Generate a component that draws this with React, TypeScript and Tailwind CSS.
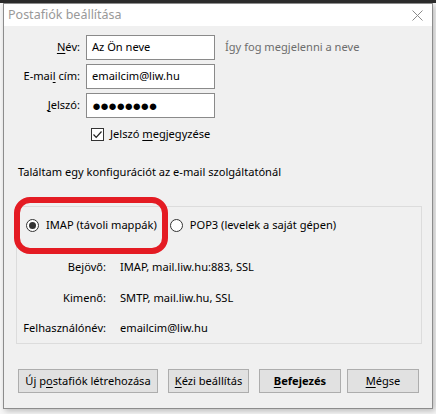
import React from "react";

const font = { fontFamily: '"Noto Sans", "Open Sans", sans-serif' };

const U: React.FC<{ children: React.ReactNode }> = ({ children }) => (
  <span className="underline underline-offset-2">{children}</span>
);

const Field: React.FC<{ label: React.ReactNode; value: string; password?: boolean }> = ({ label, value, password }) => (
  <div className="flex items-center h-[25px]">
    <div className="w-[74px] text-right pr-[6px]">{label}</div>
    <div className="w-[129px] h-[25px] bg-white border border-[#8a8a8a] flex items-center px-[5px]">
      {password ? (
        <span className="text-[15px] leading-none tracking-[-1px] font-bold">●●●●●●●●</span>
      ) : (
        value
      )}
    </div>
  </div>
);

const Radio: React.FC<{ checked?: boolean; label: string }> = ({ checked, label }) => (
  <div className="flex items-center gap-[7px]">
    <div className="w-[13px] h-[13px] rounded-full border border-[#333] bg-white flex items-center justify-center">
      {checked && <div className="w-[7px] h-[7px] rounded-full bg-[#333]" />}
    </div>
    <span>{label}</span>
  </div>
);

const Btn: React.FC<{ w: string; children: React.ReactNode; bold?: boolean }> = ({ w, children, bold }) => (
  <div
    className={`${w} h-[24px] bg-[#e1e1e1] border border-[#adadad] flex items-center justify-center ${bold ? "font-bold" : ""}`}
  >
    {children}
  </div>
);

export default function App() {
  return (
    <div className="w-[436px] h-[414px] bg-[#f7f7f7] border-t-[3px] border-[#2b2b2b] overflow-hidden text-[11.1px] text-black" style={font}>
      <div className="ml-[3px] w-[430px] h-[406px] bg-[#f0f0f0] border border-[#8c8c8c] shadow-[2px_2px_6px_rgba(0,0,0,0.25)] flex flex-col">
        {/* title bar */}
        <div className="h-[22px] bg-white flex items-center justify-between pl-[4px] pr-[9px] text-[#999]">
          <span className="text-[12.5px]">Postafiók beállítása</span>
          <svg width="11" height="11" viewBox="0 0 11 11" className="mt-[1px]">
            <path d="M0.5 0.5 L10.5 10.5 M10.5 0.5 L0.5 10.5" stroke="#8a8a8a" strokeWidth="1" />
          </svg>
        </div>

        <div className="relative flex-1 flex flex-col">
          {/* form */}
          <div className="flex flex-col gap-[4px] mt-[9px] ml-[8px]">
            <div className="flex items-center">
              <Field label={<><U>N</U>év:</>} value="Az Ön neve" />
              <span className="ml-[10px] text-[#6d6d6d]">Így fog megjelenni a neve</span>
            </div>
            <Field label={<>E-mai<U>l</U> cím:</>} value="emailcim@liw.hu" />
            <Field label={<><U>J</U>elszó:</>} value="" password />
          </div>

          <div className="flex items-center gap-[6px] ml-[87px] mt-[8px]">
            <div className="w-[13px] h-[13px] border border-[#333] bg-white flex items-center justify-center">
              <svg width="11" height="11" viewBox="0 0 11 11">
                <path d="M1.5 5.5 L4.2 8.3 L9.5 2.5" fill="none" stroke="#222" strokeWidth="1.2" />
              </svg>
            </div>
            <span>Jelszó <U>m</U>egjegyzése</span>
          </div>

          <div className="ml-[14px] mt-[21px]">Találtam egy konfigurációt az e-mail szolgáltatónál</div>

          {/* server panel */}
          <div className="ml-[12px] mr-[10px] mt-[26px] h-[138px] border border-[#dcdcdc] flex flex-col">
            <div className="flex items-center gap-[13px] ml-[9px] mt-[10px]">
              <Radio checked label="IMAP (távoli mappák)" />
              <Radio label="POP3 (levelek a saját gépen)" />
            </div>
            <div className="grid grid-cols-[89px_1fr] gap-x-[14px] gap-y-[14px] mt-[25px]">
              <span className="text-right">Bejövő:</span>
              <span>IMAP, mail.liw.hu:883, SSL</span>
              <span className="text-right">Kimenő:</span>
              <span>SMTP, mail.liw.hu, SSL</span>
              <span className="text-right">Felhasználónév:</span>
              <span>emailcim@liw.hu</span>
            </div>
          </div>

          {/* buttons */}
          <div className="flex items-center mt-[25px] ml-[14px]">
            <Btn w="w-[140px]">Új p<U>o</U>stafiók létrehozása</Btn>
            <div className="ml-[10px]">
              <Btn w="w-[81px]"><U>K</U>ézi beállítás</Btn>
            </div>
            <div className="ml-[10px]">
              <Btn w="w-[82px]" bold><U>B</U>efejezés</Btn>
            </div>
            <div className="ml-[6px]">
              <Btn w="w-[72px]"><U>M</U>égse</Btn>
            </div>
          </div>

          {/* red highlight annotation */}
          <div className="absolute left-[10px] top-[171px] w-[154px] h-[57px] border-[6px] border-[#e41b23] rounded-[16px] pointer-events-none" />
        </div>
      </div>
    </div>
  );
}
